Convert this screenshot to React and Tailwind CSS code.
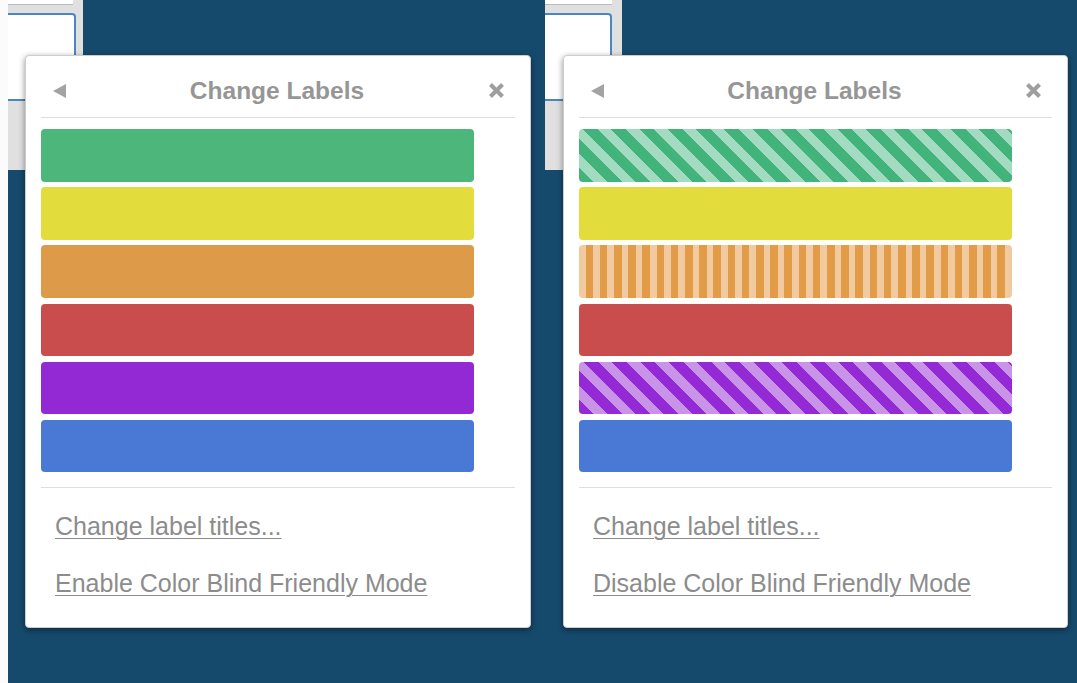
import React from "react";

function BackIcon() {
  return (
    <svg width="13" height="14" viewBox="0 0 13 14" className="shrink-0">
      <polygon points="13,0 13,14 0,7" fill="#a3a3a3" />
    </svg>
  );
}

function CloseIcon() {
  return (
    <svg width="17" height="17" viewBox="0 0 17 17" className="shrink-0">
      <line x1="2.5" y1="2.5" x2="14.5" y2="14.5" stroke="#9e9e9e" strokeWidth="4" />
      <line x1="14.5" y1="2.5" x2="2.5" y2="14.5" stroke="#9e9e9e" strokeWidth="4" />
    </svg>
  );
}

const plainBars = [
  "bg-[#4db67b]",
  "bg-[#e2dc3d]",
  "bg-[#dd9b4a]",
  "bg-[#c94d4c]",
  "bg-[#9329d4]",
  "bg-[#4a79d5]",
];

const blindBars = [
  "bg-[repeating-linear-gradient(45deg,#42b47b_0_10.5px,#a2dbbf_10.5px_20px)]",
  "bg-[#e2dc3d]",
  "bg-[repeating-linear-gradient(90deg,#f2caa0_0_6.6px,#e29b46_6.6px_14.2px)]",
  "bg-[#c94d4c]",
  "bg-[repeating-linear-gradient(45deg,#9429d6_0_10.5px,#c993e7_10.5px_20px)]",
  "bg-[#4a79d5]",
];

function Popup({ className, blind }) {
  const bars = blind ? blindBars : plainBars;
  return (
    <div
      className={`${className} h-[573px] rounded-[4px] border border-[#cdcdcd] bg-white px-[15px] shadow-[0_2px_6px_rgba(0,0,0,0.45)]`}
    >
      <div className="flex h-[62px] items-center justify-between border-b border-[#dedede] pl-[12px] pr-[10px] pt-[8px]">
        <BackIcon />
        <span className="text-[24.5px] font-bold leading-[28px] text-[#969696]">
          Change Labels
        </span>
        <CloseIcon />
      </div>
      <div className="mt-[11px] flex flex-col gap-[5.7px]">
        {bars.map((c, i) => (
          <div key={i} className={`h-[52.5px] w-[433px] rounded-[4px] ${c}`} />
        ))}
      </div>
      <div className="mt-[15px] border-t border-[#dedede]" />
      <div className="flex flex-col items-start pl-[14px] pt-[24px] text-[25px] leading-[29px] text-[#8c8c8c]">
        <span className="underline decoration-1 underline-offset-[3px]">
          Change label titles...
        </span>
        <span className="mt-[28px] underline decoration-1 underline-offset-[3px]">
          {blind ? "Disable Color Blind Friendly Mode" : "Enable Color Blind Friendly Mode"}
        </span>
      </div>
    </div>
  );
}

function Scene({ width, listW, topW, cardW, popupPos, blind }) {
  return (
    <div className={`relative shrink-0 ${width}`}>
      <div className={`flex h-[170px] flex-col bg-[#e0e0e0] ${listW}`}>
        <div className={`h-[5px] border-b border-[#b7bbbf] bg-white ${topW}`} />
        <div
          className={`mt-[8px] h-[88px] rounded-r-[4px] border-2 border-l-0 border-[#4a86c2] bg-white ${cardW}`}
        />
      </div>
      <Popup className={`absolute top-[55px] ${popupPos}`} blind={blind} />
    </div>
  );
}

export default function App() {
  return (
    <div className="flex h-[683px] w-[1077px] overflow-hidden bg-[#164a6d] font-['Liberation_Sans',Arial,sans-serif]">
      <div className="w-[8px] shrink-0 bg-[#fbfbfb]" />
      <Scene
        width="w-[537px]"
        listW="w-[75px]"
        topW="w-[65px]"
        cardW="w-[68px]"
        popupPos="left-[17px] w-[506px]"
        blind={false}
      />
      <Scene
        width="w-[532px]"
        listW="w-[77px]"
        topW="w-[67px]"
        cardW="w-[67px]"
        popupPos="left-[18px] w-[505px]"
        blind={true}
      />
    </div>
  );
}
